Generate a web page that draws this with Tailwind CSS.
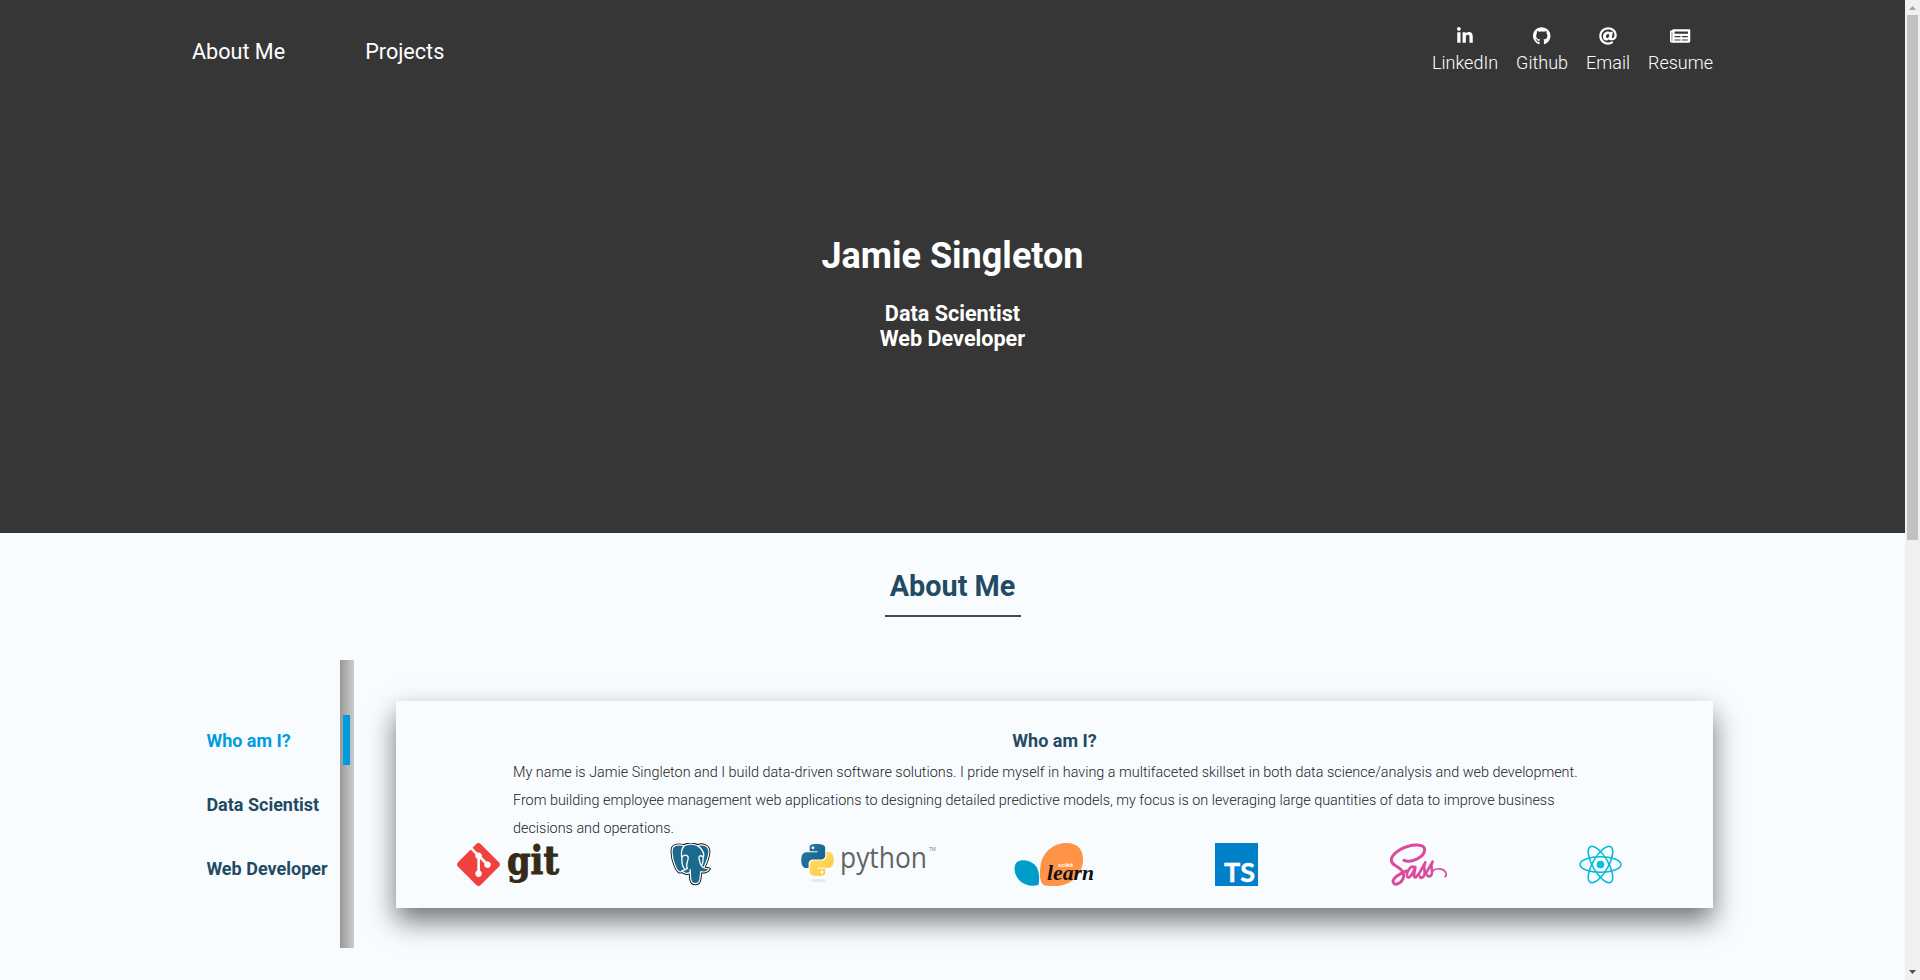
<!DOCTYPE html>
<html lang="en">
<head>
<meta charset="utf-8">
<title>Jamie Singleton</title>
<script src="https://cdn.jsdelivr.net/npm/@tailwindcss/browser@4"></script>
</head>
<body class="flex h-[980px] w-[1920px] overflow-hidden bg-[#f9fcff] font-['Roboto',sans-serif]">
<div class="h-[980px] w-[1905px] overflow-hidden">
  <header class="h-[533px] bg-[#363636] px-[192px] text-white">
    <nav class="flex h-[102px] items-start justify-between">
      <div class="flex gap-[80px] pt-[36px] text-[21.6px] leading-[32px]">
        <a>About Me</a>
        <a>Projects</a>
      </div>
      <div class="flex gap-[18px] pt-[27px] text-[18px] leading-[21px] font-light">
        <a class="flex flex-col items-center gap-[7px]">
          <svg class="h-[18px] w-[15.75px]" viewBox="0 0 448 512" fill="#fff"><path d="M100.28 448H7.4V148.9h92.88zM53.79 108.1C24.09 108.1 0 83.5 0 53.8a53.79 53.79 0 0 1 107.58 0c0 29.7-24.1 54.3-53.79 54.3zM447.9 448h-92.68V302.4c0-34.7-.7-79.2-48.29-79.2-48.29 0-55.69 37.7-55.69 76.7V448h-92.78V148.9h89.08v40.8h1.3c12.4-23.5 42.69-48.3 87.88-48.3 94 0 111.28 61.9 111.28 142.3V448z"/></svg>
          <span>LinkedIn</span>
        </a>
        <a class="flex flex-col items-center gap-[7px]">
          <svg class="h-[18px] w-[17.44px]" viewBox="0 0 496 512" fill="#fff"><path d="M165.9 397.4c0 2-2.3 3.6-5.2 3.6-3.3.3-5.6-1.3-5.6-3.6 0-2 2.3-3.6 5.2-3.6 3-.3 5.6 1.3 5.6 3.6zm-31.1-4.5c-.7 2 1.3 4.3 4.3 4.9 2.6 1 5.6 0 6.2-2s-1.3-4.3-4.3-5.2c-2.6-.7-5.5.3-6.2 2.3zm44.2-1.7c-2.9.7-4.9 2.6-4.6 4.9.3 2 2.9 3.3 5.9 2.6 2.9-.7 4.9-2.6 4.6-4.6-.3-1.9-3-3.2-5.9-2.9zM244.8 8C106.1 8 0 113.3 0 252c0 110.9 69.8 205.8 169.5 239.2 12.8 2.3 17.3-5.6 17.3-12.1 0-6.2-.3-40.4-.3-61.4 0 0-70 15-84.7-29.8 0 0-11.4-29.1-27.8-36.6 0 0-22.9-15.7 1.6-15.4 0 0 24.9 2 38.6 25.8 21.9 38.6 58.6 27.5 72.9 20.9 2.3-16 8.8-27.1 16-33.7-55.9-6.2-112.3-14.3-112.3-110.5 0-27.5 7.6-41.3 23.6-58.9-2.6-6.5-11.1-33.3 2.6-67.9 20.9-6.5 69 27 69 27 20-5.6 41.5-8.5 62.8-8.5s42.8 2.9 62.8 8.5c0 0 48.1-33.6 69-27 13.7 34.7 5.2 61.4 2.6 67.9 16 17.7 25.8 31.5 25.8 58.9 0 96.5-58.9 104.2-114.8 110.5 9.2 7.9 17 22.9 17 46.4 0 33.7-.3 75.4-.3 83.6 0 6.5 4.6 14.4 17.3 12.1C428.2 457.8 496 362.9 496 252 496 113.3 383.5 8 244.8 8z"/></svg>
          <span>Github</span>
        </a>
        <a class="flex flex-col items-center gap-[7px]">
          <svg class="h-[18px] w-[18px]" viewBox="0 0 512 512" fill="#fff"><path d="M256 8C118.941 8 8 118.919 8 256c0 137.059 110.919 248 248 248 48.154 0 95.342-14.14 135.408-40.223 12.005-7.815 14.625-24.288 5.552-35.372l-10.177-12.433c-7.671-9.371-21.179-11.667-31.373-5.129C325.92 429.757 291.314 440 256 440c-101.458 0-184-82.542-184-184S154.542 72 256 72c100.139 0 184 57.619 184 160 0 38.786-21.093 79.742-58.17 83.693-17.349-.454-16.91-12.857-13.476-30.024l23.433-121.11C394.653 149.75 383.308 136 368.225 136h-44.981a13.518 13.518 0 0 0-13.432 11.993l-.01.092c-14.697-17.901-40.448-21.775-59.971-21.775-74.58 0-137.831 62.234-137.831 151.46 0 65.303 36.785 105.87 96 105.87 26.984 0 57.369-15.637 74.991-38.333 9.522 34.104 40.613 34.104 70.71 34.104C462.609 379.41 504 307.798 504 232 504 95.653 394.023 8 256 8zm-21.68 304.43c-22.249 0-36.07-15.623-36.07-40.771 0-44.993 30.779-72.729 58.63-72.729 22.292 0 35.601 15.241 35.601 40.77 0 45.061-33.875 72.73-58.161 72.73z"/></svg>
          <span>Email</span>
        </a>
        <a class="flex flex-col items-center gap-[7px]">
          <svg class="h-[18px] w-[20.25px]" viewBox="0 0 576 512" fill="#fff"><path fill-rule="evenodd" d="M552 64H88c-13.255 0-24 10.745-24 24v8H24c-13.255 0-24 10.745-24 24v272c0 30.928 25.072 56 56 56h472c26.51 0 48-21.49 48-48V88c0-13.255-10.745-24-24-24zM56 400a8 8 0 0 1-8-8V144h16v248a8 8 0 0 1-8 8zM292 384H140q-12 0-12-12v-8q0-12 12-12h152q12 0 12 12v8q0 12-12 12zM500 384H348q-12 0-12-12v-8q0-12 12-12h152q12 0 12 12v8q0 12-12 12zM292 288H140q-12 0-12-12v-8q0-12 12-12h152q12 0 12 12v8q0 12-12 12zM500 288H348q-12 0-12-12v-8q0-12 12-12h152q12 0 12 12v8q0 12-12 12zM500 192H140q-12 0-12-12v-40q0-12 12-12h360q12 0 12 12v40q0 12-12 12z"/></svg>
          <span>Resume</span>
        </a>
      </div>
    </nav>
    <div class="flex flex-col items-center pt-[133px] font-bold">
      <h1 class="text-[36px] leading-[42px]">Jamie Singleton</h1>
      <h2 class="mt-[24px] text-center text-[21.6px] leading-[25px]">Data Scientist<br>Web Developer</h2>
    </div>
  </header>

  <main class="px-[192px]">
    <div class="flex justify-center pt-[36px]">
      <h2 class="flex h-[48px] w-[136px] justify-center border-b-2 border-[#4a4a4a] text-[28.8px] leading-[34px] font-bold text-[#224b63]">About Me</h2>
    </div>
    <div class="mt-[43px] flex">
      <div class="flex h-[288px] w-[162px] justify-between">
        <ul class="flex flex-col pt-[49px] pl-[14.4px] text-[18px] leading-[64px] font-bold whitespace-nowrap text-[#224b63]">
          <li class="text-[#009ce0]">Who am I?</li>
          <li>Data Scientist</li>
          <li>Web Developer</li>
        </ul>
        <div class="w-[14px] bg-linear-to-r from-[#999] to-[#ccc] pt-[55px] pl-[3px]">
          <div class="h-[50px] w-[7px] bg-[#009ce0]"></div>
        </div>
      </div>
      <section class="mt-[41px] ml-[42px] h-[207px] w-[1317px] bg-[#f9fcff] px-[21px] pt-[29px] shadow-[0_13px_26px_rgba(0,0,0,0.55)]">
        <h3 class="text-center text-[18px] leading-[21px] font-bold text-[#224b63]">Who am I?</h3>
        <p class="mt-[8px] pr-[97px] pl-[96px] text-[14.4px] leading-[28px] font-light text-[#222]">My name is Jamie Singleton and I build data-driven software solutions. I pride myself in having a multifaceted skillset in both data science/analysis and web development. From building employee management web applications to designing detailed predictive models, my focus is on leveraging large quantities of data to improve business decisions and operations.</p>
        <div class="grid grid-cols-7 justify-items-center">
          <svg class="h-[43px] w-[103px] overflow-visible" viewBox="0 0 103 43">
            <g transform="scale(1.79)"><path fill="#f0413e" d="M23.546 10.93L13.067.452c-.604-.603-1.582-.603-2.188 0L8.708 2.627l2.76 2.76c.645-.215 1.379-.07 1.889.441.516.515.658 1.258.438 1.9l2.658 2.66c.645-.223 1.387-.078 1.9.435.721.72.721 1.884 0 2.604-.719.719-1.881.719-2.6 0-.539-.541-.674-1.337-.404-1.996L12.86 8.955v6.525c.176.086.342.203.488.348.713.721.713 1.883 0 2.6-.719.721-1.889.721-2.609 0-.719-.719-.719-1.879 0-2.598.182-.18.387-.316.605-.406V8.835c-.217-.091-.424-.222-.6-.401-.545-.545-.676-1.342-.396-2.009L7.636 3.7.45 10.881c-.6.605-.6 1.584 0 2.189l10.48 10.477c.604.604 1.582.604 2.186 0l10.43-10.43c.605-.603.605-1.582 0-2.187"/></g>
            <text x="50" y="31" font-family="DejaVu Serif" font-weight="700" font-size="39" fill="#362b16" stroke="#362b16" stroke-width="1" textLength="52" lengthAdjust="spacingAndGlyphs">git</text>
          </svg>
          <svg class="h-[43px] w-[41px]" viewBox="0 0 122 129" fill="none" stroke-linecap="round" stroke-linejoin="round">
            <path fill="#1b698e" stroke="#111" stroke-width="9" d="M6 22C5 6 25 3 40 8 55 2 70 2 82 8 97 2 118 8 116 28 114 48 106 64 101 74 106 78 113 75 117 78 112 87 99 88 92 86L89 110C86 126 65 126 62 110L60 88C52 94 40 91 36 84 22 100 4 48 6 22Z"/>
            <path fill="#1b698e" stroke="#fff" stroke-width="3.5" d="M6 22C5 6 25 3 40 8 55 2 70 2 82 8 97 2 118 8 116 28 114 48 106 64 101 74 106 78 113 75 117 78 112 87 99 88 92 86L89 110C86 126 65 126 62 110L60 88C52 94 40 91 36 84 22 100 4 48 6 22Z"/>
            <path stroke="#fff" stroke-width="4" d="M42 9C30 22 34 36 35 44 40 34 50 34 54 42 56 52 44 66 52 76 46 82 40 80 36 84M35 44C36 60 34 68 42 76M82 8C98 18 104 36 99 42 90 34 84 40 87 48 90 60 90 72 101 74M99 42C99 54 98 62 94 68M60 88V80"/>
          </svg>
          <svg class="h-[43px] w-[142px] overflow-visible" viewBox="0 0 142 43">
            <defs>
              <linearGradient id="blue" x1="0" y1="0" x2="1" y2="1"><stop stop-color="#2f7cae"/><stop offset="1" stop-color="#0d5c7e"/></linearGradient>
              <linearGradient id="gold" x1="0" y1="0" x2="1" y2="1"><stop stop-color="#ffe16a"/><stop offset="1" stop-color="#ffc545"/></linearGradient>
            </defs>
            <ellipse cx="17" cy="37.5" rx="8" ry="1.6" fill="#e6e9ec"/>
            <g transform="translate(.3 .9) scale(1.34)">
              <path fill="url(#blue)" d="M14.25.18l.9.2.73.26.59.3.45.32.34.34.25.34.16.33.1.3.04.26.02.2-.01.13V8.5l-.05.63-.13.55-.21.46-.26.38-.3.31-.33.25-.35.19-.35.14-.33.1-.3.07-.26.04-.21.02H8.77l-.69.05-.59.14-.5.22-.41.27-.33.32-.27.35-.2.36-.15.37-.1.35-.07.32-.04.27-.02.21v3.06H3.17l-.21-.03-.28-.07-.32-.12-.35-.18-.36-.26-.36-.36-.35-.46-.32-.59-.28-.73-.21-.88-.14-1.05-.05-1.23.06-1.22.16-1.04.24-.87.32-.71.36-.57.4-.44.42-.33.42-.24.4-.16.36-.1.32-.05.24-.01h.16l.06.01h8.16v-.83H6.18l-.01-2.75-.02-.37.05-.34.11-.31.17-.28.25-.26.31-.23.38-.2.44-.18.51-.15.58-.12.64-.1.71-.06.77-.04.84-.02 1.27.05zm-6.3 1.98l-.23.33-.08.41.08.41.23.34.33.22.41.09.41-.09.33-.22.23-.34.08-.41-.08-.41-.23-.33-.33-.22-.41-.09-.41.09z"/>
              <path fill="url(#gold)" d="M21.1 6.11l.28.06.32.12.35.18.36.27.36.35.35.47.32.59.28.73.21.88.14 1.04.05 1.23-.06 1.23-.16 1.04-.24.86-.32.71-.36.57-.4.45-.42.33-.42.24-.4.16-.36.09-.32.05-.24.02-.16-.01h-8.22v.82h5.84l.01 2.76.02.36-.05.34-.11.31-.17.29-.25.25-.31.24-.38.2-.44.17-.51.15-.58.13-.64.09-.71.07-.77.04-.84.01-1.27-.04-1.07-.14-.9-.2-.73-.25-.59-.3-.45-.33-.34-.34-.25-.34-.16-.33-.1-.3-.04-.25-.02-.2.01-.13v-5.34l.05-.64.13-.54.21-.46.26-.38.3-.32.33-.24.35-.2.35-.14.33-.1.3-.06.26-.04.21-.02.13-.01h5.84l.69-.05.59-.14.5-.21.41-.28.33-.32.27-.35.2-.36.15-.36.1-.35.07-.32.04-.28.02-.21V6.07h2.09l.14.01zm-6.47 14.25l-.23.33-.08.41.08.41.23.33.33.23.41.08.41-.08.33-.23.23-.33.08-.41-.08-.41-.23-.33-.33-.23-.41-.08-.41.08z"/>
            </g>
            <text x="39" y="24.500" font-family="Open Sans" font-weight="400" font-size="29" fill="#646464" textLength="87" lengthAdjust="spacingAndGlyphs">python</text>
            <text x="128" y="7.600" font-family="Liberation Sans" font-size="5" fill="#888" textLength="7">TM</text>
          </svg>
          <svg class="h-[43px] w-[80px] overflow-visible" viewBox="0 0 80 43">
            <path fill="#009dca" d="M3 19C8 16 16 17 21 22 25 26 26 34 24.500 42 17 44 10 42 5 37 0 31-1 23 3 19Z"/>
            <path fill="#ff9448" d="M31 42.500C26 41 25 33 26.500 23 28 10 39 0 52 0 65 0 70 8 69 19 67 34 55 43 42 43 38 43 34 43 31 42.500Z"/>
            <text x="44" y="23.500" font-family="Liberation Sans" font-weight="700" font-size="6" fill="#fff" textLength="15">scikit</text>
            <text x="33" y="36.500" font-family="Liberation Serif" font-style="italic" font-weight="700" font-size="21" fill="#111" textLength="47" lengthAdjust="spacingAndGlyphs">learn</text>
          </svg>
          <svg class="h-[43px] w-[43px]" viewBox="0 0 43 43">
            <path fill="#0080c9" d="M0 0h43v43H0z"/>
            <text x="9" y="39" font-family="Lato" font-weight="700" font-size="27" fill="#fff" stroke="#fff" stroke-width=".4" textLength="31" lengthAdjust="spacingAndGlyphs">TS</text>
          </svg>
          <svg class="h-[43px] w-[57px]" viewBox="0 0 171 129" fill="none" stroke="#db4a9b" stroke-linecap="round" stroke-linejoin="round">
            <path stroke-width="9" d="M42 52C62 60 103 45 104 20 103 0 62 2 30 20 0 38-4 57 18 69 38 80 46 92 39 107 31 125 9 129 9 115 9 102 30 92 50 84"/>
            <path stroke-width="8" d="M72 72C62 66 50 85 51 98 53 112 67 98 76 72L72 98C73 108 80 102 86 93"/>
            <path stroke-width="8" d="M86 94L106 58C96 74 110 84 102 98 98 106 91 106 90 101M106 94L128 56C117 70 131 80 125 94 121 102 114 102 112 97"/>
            <path stroke-width="5" d="M127 85C138 72 163 77 168 90 170 97 167 100 165 101"/>
          </svg>
          <svg class="h-[43px] w-[43px]" viewBox="-21.500 -21.500 43 43" fill="none" stroke="#00bcd8" stroke-width="1.5">
            <circle r="3.800" fill="#00c4de" stroke="none"/>
            <ellipse rx="20.500" ry="7.800"/>
            <ellipse rx="20.500" ry="7.800" transform="rotate(60)"/>
            <ellipse rx="20.500" ry="7.800" transform="rotate(120)"/>
          </svg>
        </div>
      </section>
    </div>
  </main>
</div>
<aside class="flex h-[980px] w-[15px] flex-col items-center bg-[#f0f0f0]">
  <svg class="h-[15px] w-[15px] shrink-0" viewBox="0 0 15 15"><path fill="#a3a3a3" d="M4 10h7L7.500 6z"/></svg>
  <div class="h-[525px] w-[11px] bg-[#c1c1c1]"></div>
  <div class="grow"></div>
  <svg class="h-[15px] w-[15px] shrink-0" viewBox="0 0 15 15"><path fill="#505050" d="M4 5h7L7.500 9z"/></svg>
</aside>
</body>
</html>
